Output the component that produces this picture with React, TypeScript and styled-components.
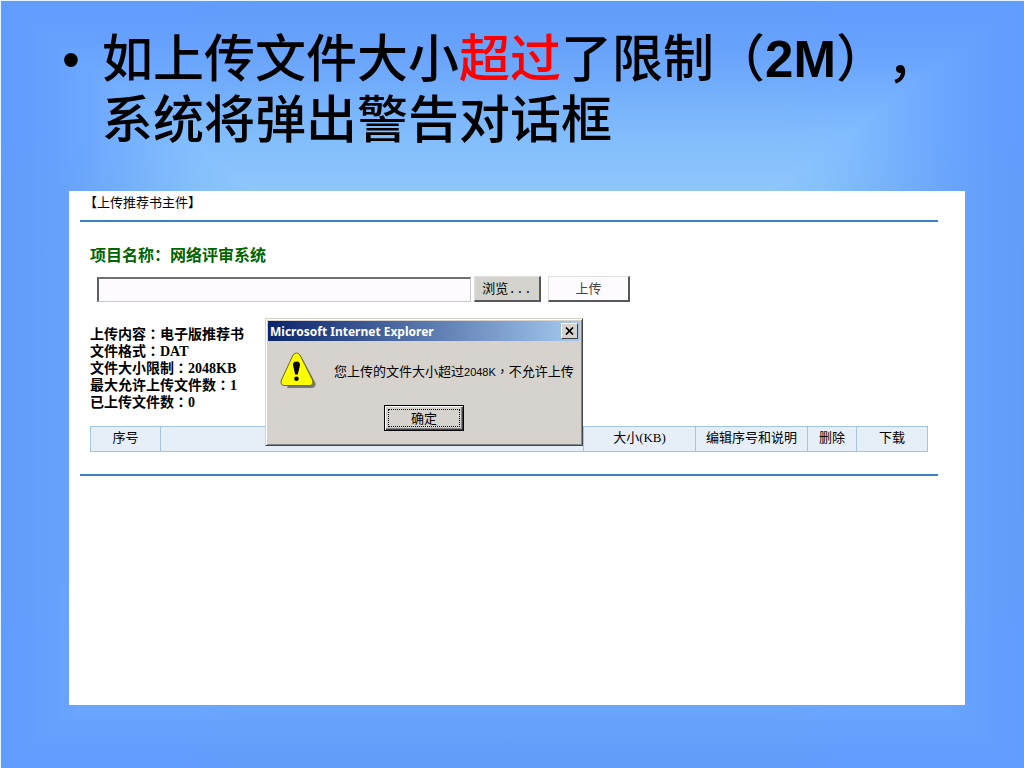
import React from "react";
import styled, { createGlobalStyle } from "styled-components";

const GlobalStyle = createGlobalStyle`
  *, *::before, *::after { box-sizing: border-box; }
  body {
    margin: 0;
    font-family: "Liberation Sans", "Noto Sans CJK SC", sans-serif;
    color: #000;
    text-spacing-trim: space-all;
  }
`;

const glow =
  "#619cff, #67a2ff 6%, #74afff 12%, #82beff 18%, #8ec5fb 24%, #a0d0fb 50%, #8ec5fb 76%, #82beff 82%, #74afff 88%, #67a2ff 94%, #619cff";

const Slide = styled.main`
  min-height: 100vh;
  display: flex;
  flex-direction: column;
  gap: 40px;
  padding: 28px 59px 63px 68px;
  border-top: 1px solid #e4f4fc;
  border-left: 1px solid #e4f4fc;
  background-image:
    linear-gradient(to right, ${glow}),
    linear-gradient(to bottom, ${glow});
  background-blend-mode: darken;
`;

const Points = styled.ul`
  margin: 0;
  padding: 0;
  list-style: none;
`;

const Point = styled.li`
  display: flex;
  font-size: 51px;
  line-height: 61px;
  font-weight: 500;

  &::before {
    content: "•";
    flex: 0 0 33px;
    margin-left: -7px;
    margin-right: 7px;
  }
`;

const Warn = styled.span`
  color: #ff0000;
`;

const Page = styled.section`
  position: relative;
  flex: 1;
  padding: 0 27px 0 11px;
  background: #fff;
`;

const PageTitle = styled.h1`
  margin: 0;
  padding: 2px 4px 7px;
  font-size: 13px;
  font-weight: 400;
  line-height: 20px;
`;

const Body = styled.div`
  border-top: 2px solid #3b80bf;
  border-bottom: 2px solid #3b80bf;
  padding: 22px 10px;
`;

const Project = styled.h2`
  margin: 0 0 8px;
  font-size: 16px;
  line-height: 24px;
  color: #006400;
`;

const UploadForm = styled.form`
  display: flex;
  align-items: center;
  padding-left: 7px;
`;

const FileField = styled.input`
  width: 374px;
  height: 25px;
  margin-right: 3px;
  padding: 0 4px;
  background: #fefbff;
  border: 1px solid #c9c7c9;
  border-top: 2px solid #707074;
  border-left: 2px solid #606064;
  outline: none;
`;

const FormButton = styled.button<{ $plain?: boolean }>`
  width: ${(p) => (p.$plain ? 82 : 67)}px;
  height: 26px;
  margin-right: 7px;
  padding: 0 0 2px;
  font-family: "Liberation Mono", "Noto Sans CJK SC", monospace;
  font-size: 13px;
  color: ${(p) => (p.$plain ? "#444" : "#000")};
  background: ${(p) => (p.$plain ? "#fefbff" : "#d4d2cc")};
  border: 1px solid #e0dede;
  border-right: 2px solid #58585c;
  border-bottom: 2px solid #58585c;
`;

const Facts = styled.ul`
  margin: 24px 0 15px;
  padding: 0;
  list-style: none;
  font-family: "Liberation Serif", "Noto Sans CJK TC", serif;
  font-size: 14px;
  line-height: 17px;
  font-weight: 700;
`;

const FileTable = styled.table`
  width: 100%;
  table-layout: fixed;
  border-collapse: collapse;
  font-family: "Liberation Serif", "Noto Sans CJK SC", serif;
  font-size: 13px;
  line-height: 18px;
`;

const HeadCell = styled.th<{ $width?: number }>`
  width: ${(p) => (p.$width ? p.$width + "px" : "auto")};
  height: 25px;
  padding: 0 0 2px;
  font-weight: 400;
  background: #e6eff8;
  border: 1px solid #a4c4e4;
`;

const Dialog = styled.div`
  position: absolute;
  left: 196px;
  top: 127px;
  width: 318px;
  height: 128px;
  padding: 2px;
  background: #d6d3ce;
  border: 1px solid;
  border-color: #d6d3ce #46464a #46464a #d6d3ce;
  box-shadow: inset 1px 1px #fff, inset -1px -1px #86868a;
`;

const TitleBar = styled.header`
  display: flex;
  align-items: center;
  justify-content: space-between;
  height: 20px;
  padding: 0 2px;
  color: #fff;
  font-family: "Noto Sans", sans-serif;
  font-size: 12px;
  font-weight: 700;
  background: linear-gradient(to right, #0a246a, #a6caf0);
`;

const CloseButton = styled.button`
  display: flex;
  align-items: center;
  justify-content: center;
  width: 17px;
  height: 16px;
  padding: 0;
  background: #d6d3ce;
  border: 1px solid;
  border-color: #fff #404044 #404044 #fff;
`;

const Message = styled.div`
  display: flex;
  align-items: center;
  gap: 17px;
  padding: 11px 0 0 12px;
  font-family: "Noto Sans CJK TC", sans-serif;
  font-size: 13px;
  white-space: nowrap;
`;

const Size = styled.span`
  font-family: "Liberation Sans", sans-serif;
  font-size: 11px;
`;

const OkButton = styled.button`
  display: block;
  width: 80px;
  height: 26px;
  margin: 16px auto 0;
  padding: 2px;
  font-family: "Noto Sans CJK SC", sans-serif;
  font-size: 13px;
  line-height: 16px;
  background: #d6d3ce;
  border: 1px solid #000;
  box-shadow: inset 1px 1px #fff, inset -1px -1px #404044, inset -2px -2px #86868a;
`;

const FocusRing = styled.span`
  display: block;
  margin: 0 1px;
  border: 1px dotted #000;
`;

const WarningIcon = () => (
  <svg width="37" height="37" viewBox="0 0 37 37" aria-hidden="true">
    <path d="M18 4 Q20 3 22 6 L35.500 31 Q36 35.500 32 36 L7 36 Z" fill="#77777a" />
    <path
      d="M13 3 Q16.500 -1 20 3 L32.500 28 Q34 33 30 33.500 L4 33.500 Q0 33 1.500 28 Z"
      fill="#ffff00"
      stroke="#6b6b10"
      strokeWidth="1"
    />
    <path d="M13 13 Q13 9.500 16.500 9.500 Q20 9.500 20 13 L17.800 22.500 L15.200 22.500 Z" fill="#000" />
    <circle cx="16.500" cy="26.800" r="2.300" fill="#000" />
  </svg>
);

const columns: { label: string; width?: number }[] = [
  { label: "序号", width: 70 },
  { label: "" },
  { label: "大小(KB)", width: 112 },
  { label: "编辑序号和说明", width: 112 },
  { label: "删除", width: 49 },
  { label: "下载", width: 71 },
];

const facts = [
  "上传内容：电子版推荐书",
  "文件格式：DAT",
  "文件大小限制：2048KB",
  "最大允许上传文件数：1",
  "已上传文件数：0",
];

export default function App() {
  return (
    <>
      <GlobalStyle />
      <Slide lang="zh-CN">
        <Points>
          <Point>
            <div>
              如上传文件大小<Warn>超过</Warn>了限制（<b>2M</b>），
              <br />
              系统将弹出警告对话框
            </div>
          </Point>
        </Points>
        <Page>
          <PageTitle>【上传推荐书主件】</PageTitle>
          <Body>
            <Project>项目名称：网络评审系统</Project>
            <UploadForm onSubmit={(e) => e.preventDefault()}>
              <FileField type="text" aria-label="文件" />
              <FormButton type="button">浏览...</FormButton>
              <FormButton type="submit" $plain>上传</FormButton>
            </UploadForm>
            <Facts lang="zh-TW">
              {facts.map((fact) => (
                <li key={fact}>{fact}</li>
              ))}
            </Facts>
            <FileTable>
              <thead>
                <tr>
                  {columns.map((column, i) => (
                    <HeadCell key={i} $width={column.width}>{column.label}</HeadCell>
                  ))}
                </tr>
              </thead>
            </FileTable>
          </Body>
          <Dialog role="alertdialog" aria-label="Microsoft Internet Explorer">
            <TitleBar>
              Microsoft Internet Explorer
              <CloseButton type="button" aria-label="关闭">
                <svg width="9" height="8" viewBox="0 0 9 8" aria-hidden="true">
                  <path d="M1 0.500 L8 7.500 M8 0.500 L1 7.500" stroke="#000" strokeWidth="1.700" />
                </svg>
              </CloseButton>
            </TitleBar>
            <Message lang="zh-TW">
              <WarningIcon />
              <span>您上传的文件大小超过<Size>2048K</Size>，不允许上传</span>
            </Message>
            <OkButton type="button">
              <FocusRing>确定</FocusRing>
            </OkButton>
          </Dialog>
        </Page>
      </Slide>
    </>
  );
}
